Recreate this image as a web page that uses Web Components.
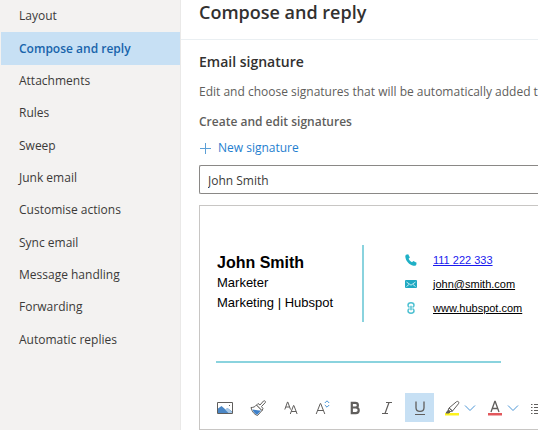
<!DOCTYPE html>
<html lang="en">
<head>
<meta charset="utf-8">
<meta name="viewport" content="width=device-width, initial-scale=1">
<title>Compose and reply</title>
<style>
  body {
    margin: 0;
    background: #fff;
    color: #323130;
    font: 12px/16px "Open Sans", "Noto Sans", sans-serif;
    overflow: hidden;
  }
</style>
</head>
<body>
<settings-page>
  <settings-nav slot="nav">
    <nav-item>Layout</nav-item>
    <nav-item active>Compose and reply</nav-item>
    <nav-item>Attachments</nav-item>
    <nav-item>Rules</nav-item>
    <nav-item>Sweep</nav-item>
    <nav-item>Junk email</nav-item>
    <nav-item>Customise actions</nav-item>
    <nav-item>Sync email</nav-item>
    <nav-item>Message handling</nav-item>
    <nav-item>Forwarding</nav-item>
    <nav-item>Automatic replies</nav-item>
  </settings-nav>
  <span slot="title">Compose and reply</span>
  <signature-settings>
    <signature-editor>
      <signature-card></signature-card>
      <format-toolbar slot="toolbar"></format-toolbar>
    </signature-editor>
  </signature-settings>
</settings-page>

<script>
class SettingsPage extends HTMLElement {
  connectedCallback() {
    this.attachShadow({ mode: "open" });
    this.shadowRoot.innerHTML = `
      <style>
        :host {
          display: grid;
          grid-template-columns: 181px minmax(0, 1fr);
          min-height: 100vh;
        }
        aside {
          background: #f3f2f1;
          border-right: 1px solid #eae9e8;
          box-sizing: border-box;
        }
        main {
          overflow: hidden;
        }
        header {
          padding: 0 18px 14px;
          border-bottom: 1px solid #eaeff2;
        }
        h1 {
          margin: 0;
          font-size: 18px;
          line-height: 25px;
          font-weight: 600;
        }
      </style>
      <aside><slot name="nav"></slot></aside>
      <main>
        <header><h1><slot name="title"></slot></h1></header>
        <slot></slot>
      </main>
    `;
  }
}

class SettingsNav extends HTMLElement {
  connectedCallback() {
    this.attachShadow({ mode: "open" });
    this.shadowRoot.innerHTML = `
      <style>
        :host {
          display: block;
        }
        nav {
          display: grid;
          grid-auto-rows: 1fr;
          min-height: 356px;
        }
      </style>
      <nav aria-label="Mail settings"><slot></slot></nav>
    `;
  }
}

class NavItem extends HTMLElement {
  connectedCallback() {
    this.attachShadow({ mode: "open" });
    this.shadowRoot.innerHTML = `
      <style>
        :host {
          display: grid;
        }
        a {
          display: flex;
          align-items: center;
          margin-left: 1px;
          padding: 0 18px;
          color: #3b3a39;
          text-decoration: none;
        }
        :host([active]) a {
          background: #c7e0f4;
          color: #1864ab;
          font-weight: 600;
        }
      </style>
      <a href="#"><slot></slot></a>
    `;
  }
}

class SignatureSettings extends HTMLElement {
  connectedCallback() {
    this.attachShadow({ mode: "open" });
    this.shadowRoot.innerHTML = `
      <style>
        :host {
          display: block;
          padding: 12px 0 0 18px;
        }
        h2 {
          margin: 0 0 12px;
          font-size: 14px;
          line-height: 20px;
          font-weight: 600;
        }
        p {
          margin: 0 0 14px;
          color: #605e5c;
          white-space: nowrap;
        }
        h3 {
          margin: 0 0 10px;
          font-size: 12px;
          line-height: 16px;
          font-weight: 600;
          color: #605e5c;
        }
        button {
          display: flex;
          align-items: center;
          gap: 7px;
          padding: 0;
          border: 0;
          background: none;
          color: #1f80cf;
          font: inherit;
        }
        input {
          display: block;
          box-sizing: border-box;
          width: 100%;
          height: 29px;
          margin: 9px 0 11px;
          padding: 2px 8px 0;
          border: 1px solid #8a8886;
          border-right: 0;
          border-radius: 2px 0 0 2px;
          color: #3b3a39;
          font: inherit;
        }
      </style>
      <h2>Email signature</h2>
      <p>Edit and choose signatures that will be automatically added to</p>
      <h3>Create and edit signatures</h3>
      <button type="button">
        <svg width="12" height="12" viewBox="0 0 12 12" stroke="#5b9fd6" aria-hidden="true">
          <path d="M6.5 1v11M1 6.5h11"/>
        </svg>
        New signature
      </button>
      <input type="text" value="John Smith" aria-label="Signature name">
      <slot></slot>
    `;
  }
}

class SignatureEditor extends HTMLElement {
  connectedCallback() {
    this.attachShadow({ mode: "open" });
    this.shadowRoot.innerHTML = `
      <style>
        :host {
          display: block;
          border: 1px solid #c8c6c4;
          border-right: 0;
        }
      </style>
      <slot></slot>
      <slot name="toolbar"></slot>
    `;
  }
}

class SignatureCard extends HTMLElement {
  connectedCallback() {
    this.attachShadow({ mode: "open" });
    this.shadowRoot.innerHTML = `
      <style>
        :host {
          --line: #8ad3de;
          display: block;
          padding: 39px 16px 30px;
          color: #000;
          font-family: "Liberation Sans", Arial, sans-serif;
        }
        .card {
          display: grid;
          grid-template-columns: 148px 1fr;
          width: 285px;
          padding-bottom: 39px;
          border-bottom: 2px solid var(--line);
        }
        .person {
          padding: 8px 0 0 1px;
          border-right: 2px solid var(--line);
          font-size: 13px;
          line-height: 20px;
        }
        strong {
          display: block;
          font-size: 16px;
        }
        .person span {
          display: block;
        }
        ul {
          margin: 0;
          padding: 3px 0 2px 41px;
          list-style: none;
        }
        li {
          display: flex;
          align-items: center;
          gap: 16px;
          height: 24px;
          font-size: 11px;
          white-space: nowrap;
        }
        svg {
          flex: none;
        }
        a {
          color: #000;
        }
        a[href^="tel"] {
          color: #1a1aee;
        }
      </style>
      <div class="card">
        <div class="person">
          <strong>John Smith</strong>
          <span>Marketer</span>
          <span>Marketing | Hubspot</span>
        </div>
        <ul>
          <li>
            <svg width="12" height="12" viewBox="0 0 12 12" fill="#1fb0c6" aria-hidden="true">
              <path d="M1 .8 3.2.2l1.7 3.2-1.3 1.3c.7 1.6 1.8 2.7 3.4 3.5l1.4-1.2 3.2 1.8-.4 2.2c-.6.7-1.7 1-2.8.8C4.3 10.9.8 7.2.3 2.8.2 2 .4 1.3 1 .8z"/>
            </svg>
            <a href="tel:111222333">111 222 333</a>
          </li>
          <li>
            <svg width="12" height="12" viewBox="0 0 12 12" aria-hidden="true">
              <rect y="2" width="12" height="8" rx="1" fill="#1fa9c2"/>
              <path d="M1.5 4 6 7.2 10.5 4M1.5 8.5 4 6.5M10.5 8.5 8 6.5" fill="none" stroke="#d4f0f5" stroke-width=".9"/>
            </svg>
            <a href="mailto:john@smith.com">john@smith.com</a>
          </li>
          <li>
            <svg width="12" height="12" viewBox="0 0 12 12" fill="none" stroke="#4fc1d2" stroke-width="1.5" aria-hidden="true">
              <path d="M4.5 5.2C3 4.8 3 4 3 3.2 3 1.6 4 .8 6 .8s3 .8 3 2.400c0 .8 0 1.600-1.500 2M4.500 6.800C3 7.200 3 8 3 8.800c0 1.600 1 2.400 3 2.400s3-.8 3-2.400c0-.8 0-1.600-1.500-2M6 3.800v4.400"/>
            </svg>
            <a href="#">www.hubspot.com</a>
          </li>
        </ul>
      </div>
    `;
  }
}

class FormatToolbar extends HTMLElement {
  connectedCallback() {
    this.attachShadow({ mode: "open" });
    this.shadowRoot.innerHTML = `
      <style>
        :host {
          display: flex;
          align-items: center;
          padding: 0 0 7px 9px;
          overflow: hidden;
        }
        button {
          display: flex;
          flex: none;
          align-items: center;
          justify-content: center;
          width: 32px;
          height: 29px;
          padding: 0;
          border: 0;
          background: none;
        }
        button.wide {
          width: 34px;
        }
        button.split {
          justify-content: flex-end;
          width: 43px;
          padding-right: 3px;
          gap: 4px;
        }
        button[aria-pressed="true"] {
          width: 29px;
          margin: 0 2px;
          background: #c7e0f4;
        }
        svg {
          flex: none;
          fill: none;
          stroke: #605e5c;
        }
      </style>
      <button type="button" aria-label="Insert picture">
        <svg width="16" height="16" viewBox="0 0 16 16">
          <path d="M1 13V8.500l3.500-2.500 4 3.500 2-1.500 4.500 3.500V13z" fill="#4a86c5" stroke="none"/>
          <path d="m8 9.500 2.500-1.500 4.500 4v1.500h-3z" fill="#a9c8e6" stroke="none"/>
          <path d="M.5 2.500h15v11H.5z"/>
          <path d="M12 5h1v1h-1z" fill="#605e5c" stroke="none"/>
        </svg>
      </button>
      <button type="button" class="wide" aria-label="Format painter">
        <svg width="16" height="16" viewBox="0 0 16 16">
          <path d="M1 7.500c2.500 0 4-.7 5.500-2.500L12 10.500l-4.500 5C4 14.500 2 11.500 1 7.500z" fill="#fff"/>
          <path d="M2.500 9.500c2 .3 6 .8 8.500 1L7.300 14.700C5 14 3.500 12 2.500 9.500z" fill="#3d80c9" stroke="none"/>
          <path d="m6.500 5 1.500-1.500 2 1.500 3.500-4c1-1 2.700.7 1.700 1.700L11.500 6.500l1.500 2.200-1 1.800z" fill="#fff"/>
        </svg>
      </button>
      <button type="button" aria-label="Font">
        <svg width="14" height="16" viewBox="0 0 14 16">
          <path d="M.8 9.500 3.500 2h.3l2.700 7.500M1.800 7h3.800M6.300 14 9.500 5.500h.4l3.200 8.500M7.300 11.500h4.900"/>
        </svg>
      </button>
      <button type="button" aria-label="Font size">
        <svg width="16" height="16" viewBox="0 0 16 16">
          <path d="M1.200 14 5.300 3.500h.4L9.800 14M2.700 10.500h5.600"/>
          <path d="m9.800 3 2.200-2.200L14.200 3M9.800 5l2.200 2.200L14.200 5" stroke="#4a95d6"/>
        </svg>
      </button>
      <button type="button" aria-label="Bold">
        <svg width="16" height="16" viewBox="0 0 16 16">
          <path d="M4.800 2.800h3.400c3.600 0 3.600 4.700 0 4.700H4.800zM4.800 7.500h4c3.900 0 3.900 5.700 0 5.700h-4z" stroke-width="2.200"/>
        </svg>
      </button>
      <button type="button" aria-label="Italic">
        <svg width="16" height="16" viewBox="0 0 16 16">
          <path d="M7 2.500h6M3 13.500h6M10 2.500l-4 11" stroke-width="1.200"/>
        </svg>
      </button>
      <button type="button" aria-label="Underline" aria-pressed="true">
        <svg width="16" height="16" viewBox="0 0 16 16">
          <path d="M4 1.500v6.300c0 4.800 8 4.800 8 0V1.500" stroke-width="1.300"/>
          <path d="M3 14.500h10"/>
        </svg>
      </button>
      <button type="button" class="split" aria-label="Highlight">
        <svg width="16" height="16" viewBox="0 0 16 16">
          <path d="M1 13h14v2.500H1z" fill="#fdf21c" stroke="none"/>
          <path d="m5 8 7.500-6.300c1.500-1 3 .5 2 2L8.500 11zM5 8l-1 2.500-2 2.500h3l1.500-1.500 2-.5z"/>
          <path d="m4.500 9.500 2.500 2L5 13H2z" fill="#605e5c" stroke="none"/>
        </svg>
        <svg width="12" height="8" viewBox="0 0 12 8">
          <path d="m1 1.500 5 5 5-5" style="stroke: #4a95d6"/>
        </svg>
      </button>
      <button type="button" class="split" aria-label="Font colour">
        <svg width="16" height="16" viewBox="0 0 16 16">
          <path d="M1 13h14v2.500H1z" fill="#e2585c" stroke="none"/>
          <path d="M4 12 7.800 1.500h.4L12 12M5.300 8.500h5.400" stroke-width="1.300"/>
        </svg>
        <svg width="12" height="8" viewBox="0 0 12 8">
          <path d="m1 1.500 5 5 5-5" style="stroke: #4a95d6"/>
        </svg>
      </button>
      <button type="button" aria-label="Bullets">
        <svg width="16" height="16" viewBox="0 0 16 16">
          <path d="M4 4.500h12M4 7.500h12M4 10.500h12M4 13.500h12M1 4.500h1.500M1 7.500h1.500M1 10.500h1.500M1 13.500h1.500"/>
        </svg>
      </button>
    `;
  }
}

customElements.define("settings-page", SettingsPage);
customElements.define("settings-nav", SettingsNav);
customElements.define("nav-item", NavItem);
customElements.define("signature-settings", SignatureSettings);
customElements.define("signature-editor", SignatureEditor);
customElements.define("signature-card", SignatureCard);
customElements.define("format-toolbar", FormatToolbar);
</script>
</body>
</html>
